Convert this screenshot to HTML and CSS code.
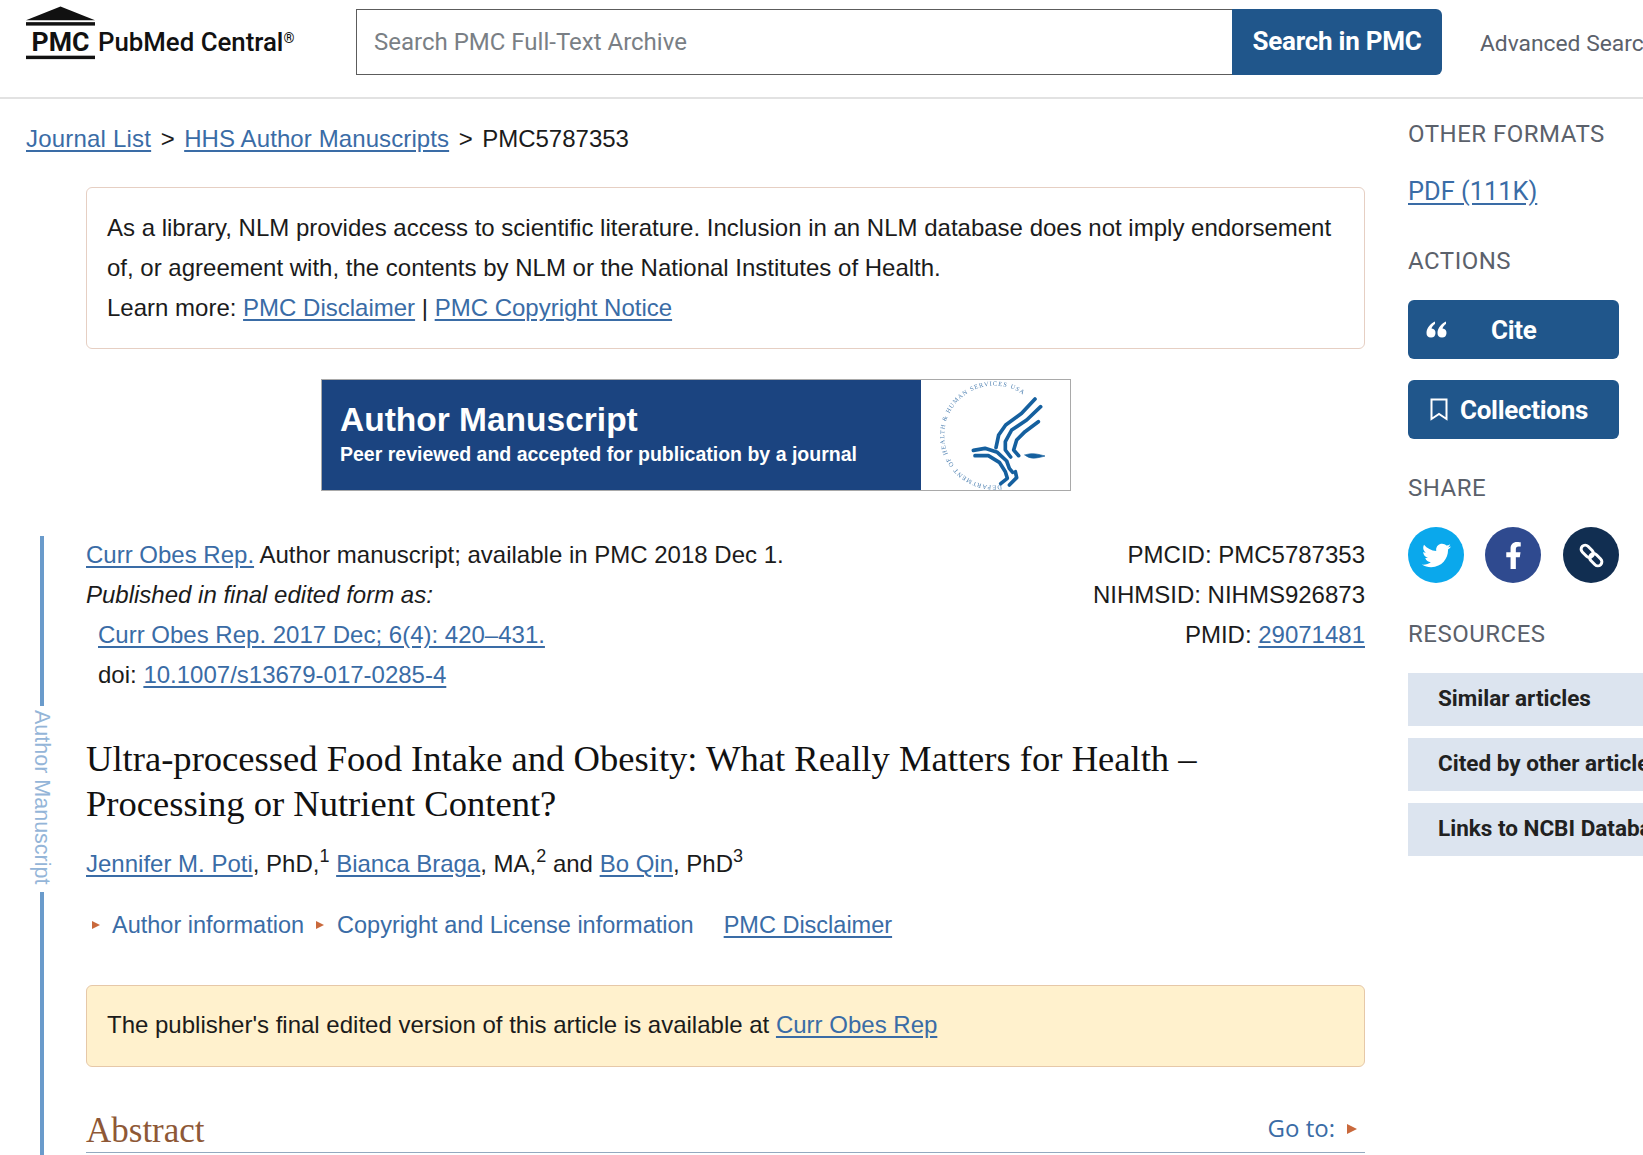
FILE: index.html
```html
<!DOCTYPE html>
<html lang="en">
<head>
<meta charset="utf-8">
<title>PMC article</title>
<link rel="stylesheet" href="styles.css">
</head>
<body>
<header class="top">
  <a class="brand">
    <svg class="brand-mark" width="69" height="54" viewBox="0 0 70 54">
      <polygon points="0,14 35,0 70,14"/>
      <rect x="0" y="16" width="70" height="3.500"/>
      <rect x="0" y="50" width="70" height="3.500"/>
      <text x="35" y="45" text-anchor="middle" class="brand-pmc">PMC</text>
    </svg>
    <span class="brand-name">PubMed Central<sup>®</sup></span>
  </a>
  <form class="search">
    <div class="search-input">Search PMC Full-Text Archive</div>
    <div class="search-btn">Search in PMC</div>
  </form>
  <span class="advanced">Advanced Search</span>
</header>
<div class="layout">
  <main class="article">
    <nav class="crumbs"><a class="crumb-first">Journal List</a><span class="sep">&gt;</span><a class="crumb-hhs">HHS Author Manuscripts</a><span class="sep">&gt;</span><span>PMC5787353</span></nav>
    <div class="rail"><i class="rail-line rail-top"></i><span class="rail-text">Author Manuscript</span><i class="rail-line rail-bottom"></i></div>
    <section class="notice">
      As a library, NLM provides access to scientific literature. Inclusion in an NLM database does not imply endorsement of, or agreement with, the contents by NLM or the National Institutes of Health.<br>
      Learn more: <a>PMC Disclaimer</a> | <a>PMC Copyright Notice</a>
    </section>
    <div class="banner">
      <div class="banner-blue">
        <div class="banner-title">Author Manuscript</div>
        <div class="banner-sub">Peer reviewed and accepted for publication by a journal</div>
      </div>
      <div class="banner-seal">
        <svg width="149" height="110" viewBox="33 15 447 330">
          <defs><path id="sealArc" d="M275 330A150 150 0 1 1 358 75"/></defs>
          <text class="seal-text"><textPath href="#sealArc">DEPARTMENT OF HEALTH &amp; HUMAN SERVICES USA</textPath></text>
          <g class="seal-bird">
            <path d="M375 72L335 115L287 150L266 180L258 218"/>
            <path d="M392 95L350 135L305 165L286 200L286 225L302 246"/>
            <path d="M385 140L345 170L320 195L311 225L326 242"/>
            <path d="M190 226L225 220L262 232L290 258L298 280L308 292"/>
            <path d="M195 242L235 242L268 262L286 290L292 310L272 326"/>
            <path d="M316 290L320 308L298 330"/>
            <path class="seal-fill" d="M345 240C368 232 385 238 405 243C380 250 360 254 345 240Z"/>
          </g>
        </svg>
      </div>
    </div>
    <div class="cite-row">
      <div>
        <div><a>Curr Obes Rep.</a> Author manuscript; available in PMC 2018 Dec 1.</div>
        <div><em>Published in final edited form as:</em></div>
        <div class="indent"><a>Curr Obes Rep. 2017 Dec; 6(4): 420–431.</a></div>
        <div class="indent">doi: <a>10.1007/s13679-017-0285-4</a></div>
      </div>
      <div class="ids">
        <div>PMCID: PMC5787353</div>
        <div>NIHMSID: NIHMS926873</div>
        <div>PMID: <a>29071481</a></div>
      </div>
    </div>
    <h1 class="title">Ultra-processed Food Intake and Obesity: What Really Matters for Health – Processing or Nutrient Content?</h1>
    <p class="authors"><a>Jennifer M. Poti</a>, PhD,<sup>1</sup> <a>Bianca Braga</a>, MA,<sup>2</sup> and <a>Bo Qin</a>, PhD<sup>3</sup></p>
    <div class="meta-links">
      <span class="tri"></span><span class="plain-link">Author information</span>
      <span class="tri tri-second"></span><span class="plain-link">Copyright and License information</span>
      <a class="meta-disclaimer">PMC Disclaimer</a>
    </div>
    <div class="publisher">The publisher's final edited version of this article is available at <a>Curr Obes Rep</a></div>
    <div class="section-head">
      <h2>Abstract</h2>
      <span class="goto">Go to:<span class="tri tri-goto"></span></span>
    </div>
  </main>
  <aside class="side">
    <h3 class="side-h side-h-first">OTHER FORMATS</h3>
    <a class="pdf">PDF (111K)</a>
    <h3 class="side-h side-h-actions">ACTIONS</h3>
    <div class="action">
      <svg class="cite-icon" width="21" height="17" viewBox="0 0 21 17"><path d="M9 .5C5 2.500 .5 6.500 .5 12a4.500 4.500 0 1 0 5-4.500C6 5.500 7.500 4 9 3z"/><path d="M20 .5C16 2.500 11.500 6.500 11.500 12a4.500 4.500 0 1 0 5-4.500C17 5.500 18.500 4 20 3z"/></svg>
      <span class="cite-label">Cite</span>
    </div>
    <div class="action action-second">
      <svg class="book-icon" width="18" height="23" viewBox="0 0 18 23"><path d="M1.500 1.500h15v19.500l-7.500-5-7.500 5z"/></svg>
      <span>Collections</span>
    </div>
    <h3 class="side-h side-h-share">SHARE</h3>
    <div class="share">
      <span class="circle tw"><svg width="29" height="29" viewBox="0 0 512 512"><path d="M459.37 151.716c.325 4.548.325 9.097.325 13.645 0 138.72-105.583 298.558-298.558 298.558-59.452 0-114.68-17.219-161.137-47.106 8.447.974 16.568 1.299 25.34 1.299 49.055 0 94.213-16.568 130.274-44.832-46.132-.975-84.792-31.188-98.112-72.772 6.498.974 12.995 1.624 19.818 1.624 9.421 0 18.843-1.3 27.614-3.573-48.081-9.747-84.143-51.98-84.143-102.985v-1.299c13.969 7.797 30.214 12.67 47.431 13.319-28.264-18.843-46.781-51.005-46.781-87.391 0-19.492 5.197-37.36 14.294-52.954 51.655 63.675 129.3 105.258 216.365 109.807-1.624-7.797-2.599-15.918-2.599-24.04 0-57.828 46.782-104.934 104.934-104.934 30.213 0 57.502 12.67 76.67 33.137 23.715-4.548 46.456-13.32 66.599-25.34-7.798 24.366-24.366 44.833-46.132 57.827 21.117-2.273 41.584-8.122 60.426-16.243-14.292 20.791-32.161 39.308-52.628 54.253z"/></svg></span>
      <span class="circle fb"><svg width="17" height="27" viewBox="0 0 320 512"><path d="M279.14 288l14.22-92.66h-88.91v-60.13c0-25.35 12.42-50.06 52.24-50.06h40.42V6.26S260.43 0 225.36 0c-73.22 0-121.08 44.38-121.08 124.72v70.62H22.89V288h81.39v224h100.17V288z"/></svg></span>
      <span class="circle ln"><svg class="link-icon" width="25" height="25" viewBox="0 0 25 25"><g transform="rotate(45 12.500 12.500)"><rect x="-.5" y="8.500" width="14" height="8" rx="4"/><rect x="11.500" y="8.500" width="14" height="8" rx="4"/></g></svg></span>
    </div>
    <h3 class="side-h side-h-res">RESOURCES</h3>
    <div class="res">Similar articles</div>
    <div class="res">Cited by other articles</div>
    <div class="res">Links to NCBI Databases</div>
  </aside>
</div>
</body>
</html>
```
FILE: styles.css
```css
* { box-sizing: border-box; }
html, body { margin: 0; height: 1155px; overflow: hidden; }
body { width: 1643px; background: #fff; color: #1b1b1b; font: 24px/40px "Liberation Sans", Arial, sans-serif; }
a { color: #3a6ca6; text-decoration: underline; text-underline-offset: 3px; }

.top { height: 99px; border-bottom: 2px solid #e2e2e2; display: flex; padding: 6px 0 0 26px; white-space: nowrap; overflow: hidden; }
.brand { display: flex; flex: none; width: 330px; color: #111; text-decoration: none; }
.brand-mark { fill: #111; flex: none; }
.brand-pmc { font: 700 27px "Roboto", sans-serif; fill: #111; }
.brand-name { font: 500 25.800px/30px "Roboto", sans-serif; margin: 21px 0 0 3px; color: #111; }
.brand-name sup { font-size: 14px; line-height: 0; vertical-align: 8px; }
.search { display: flex; height: 66px; margin: 3px 0 0; flex: none; }
.search-input { width: 876px; border: 1px solid #5c5c5c; border-right: 0; padding-left: 17px; font: 24px/64px "Roboto", sans-serif; color: #7a7f85; }
.search-btn { width: 210px; background: #20568b; color: #fff; border-radius: 0 6px 6px 0; text-align: center; font: 700 26px/65px "Roboto", sans-serif; letter-spacing: -.25px; }
.advanced { font: 22.800px/66px "Roboto", sans-serif; color: #5b616b; margin: 5px 0 0 38px; }

.layout { display: flex; }
.article { position: relative; flex: none; width: 1408px; padding: 0 43px 0 86px; }
.crumbs { margin: 20px 0 0 -60px; height: 40px; }
.crumb-first { letter-spacing: .2px; }
.crumb-hhs { letter-spacing: .1px; }
.sep { margin: 0 9.500px; }
.rail { position: absolute; left: 26px; top: 437px; height: 621px; width: 32px; display: flex; flex-direction: column; align-items: center; gap: 4px; }
.rail-line { width: 4px; background: #6a9bcb; display: block; }
.rail-top { height: 170px; }
.rail-bottom { flex: 1; }
.rail-text { writing-mode: vertical-rl; color: #94b5d8; font-size: 21.500px; line-height: 24px; height: 178px; white-space: nowrap; }

.notice { margin-top: 28px; height: 162px; border: 1px solid #e6cfc3; border-radius: 6px; padding: 20px 20px; }
.banner { display: flex; width: 750px; height: 112px; margin: 30px 0 0 235px; border: 1px solid #a9a9a9; }
.banner-blue { width: 599px; background: #1b4480; color: #fff; padding: 18px 0 0 18px; font-family: "Liberation Sans", sans-serif; font-weight: 700; }
.banner-title { font-size: 33.500px; line-height: 44px; }
.banner-sub { font-size: 19.500px; line-height: 25px; }
.banner-seal { flex: 1; background: #fff; }
.banner-seal svg { display: block; filter: blur(.4px); }
.seal-text { font: 19px "Liberation Serif", serif; fill: #4c7fb0; letter-spacing: 3px; }
.seal-bird path { fill: none; stroke: #15609f; stroke-width: 11; stroke-linecap: round; stroke-linejoin: round; }
.seal-bird .seal-fill { fill: #15609f; stroke-width: 2; }

.cite-row { display: flex; justify-content: space-between; margin-top: 44px; }
.indent { padding-left: 12px; }
.ids { text-align: right; }
.title { margin: 41px 0 0; font: 400 36.600px/45px "Liberation Serif", serif; color: #111; width: 1135px; }
.authors { margin: 18px 0 0; }
.authors sup { font-size: 18px; line-height: 0; vertical-align: 10px; }
.meta-links { display: flex; align-items: center; margin-top: 21px; font-size: 23.500px; }
.plain-link { color: #3a6ca6; }
.tri { display: inline-block; width: 0; height: 0; border-left: 8px solid #c9693c; border-top: 4px solid transparent; border-bottom: 4px solid transparent; }
.meta-links > .tri:first-child { margin: 0 12px 0 6px; }
.tri-second { margin: 0 13px 0 12px; }
.meta-disclaimer { margin-left: 30px; }
.publisher { margin-top: 40px; height: 82px; background: #fff1cd; border: 1px solid #e6c8a8; border-radius: 6px; padding: 19px 20px; }
.section-head { display: flex; justify-content: space-between; align-items: flex-end; margin-top: 37px; height: 49px; border-bottom: 1px solid #93a9bf; }
.section-head h2 { margin: 0; font: 400 35px/42px "Liberation Serif", serif; color: #8e5836; }
.goto { font: 24px/48px "Open Sans", sans-serif; color: #3a6ca6; }
.tri-goto { margin: 0 8px 4px 12px; vertical-align: middle; border-left-width: 10px; border-top-width: 5px; border-bottom-width: 5px; }

.side { flex: none; width: 235px; font-family: "Roboto", sans-serif; }
.side-h { margin: 0; font: 400 24px/30px "Roboto", sans-serif; color: #5b616b; letter-spacing: .5px; white-space: nowrap; }
.side-h-first { margin-top: 20px; }
.pdf { display: block; font-size: 25.400px; line-height: 32px; margin-top: 26px; }
.side-h-actions { margin-top: 39px; }
.action { display: flex; align-items: center; width: 211px; height: 59px; margin-top: 24px; padding-left: 18px; border-radius: 6px; background: #20568b; color: #fff; font-weight: 700; font-size: 26px; letter-spacing: -.3px; }
.action-second { margin-top: 21px; padding-left: 22px; }
.cite-icon { fill: #fff; }
.cite-label { margin-left: 44px; }
.book-icon { fill: none; stroke: #fff; stroke-width: 2; margin-right: 12px; }
.side-h-share { margin-top: 34px; }
.share { display: flex; gap: 21px; width: 211px; margin-top: 24px; }
.circle { width: 56px; height: 56px; border-radius: 50%; display: flex; align-items: center; justify-content: center; }
.circle svg { fill: #fff; }
.tw { background: #0aa8ec; }
.fb { background: #2f4a8f; }
.ln { background: #112e51; margin-left: 1px; }
.circle .link-icon { fill: none; stroke: #fff; stroke-width: 3; overflow: visible; }
.side-h-res { margin-top: 36px; }
.res { height: 53px; margin-top: 12px; padding-left: 30px; background: #dce4ef; color: #212121; font-weight: 700; font-size: 22.500px; line-height: 51px; white-space: nowrap; overflow: hidden; }
.side-h-res + .res { margin-top: 24px; }
```
